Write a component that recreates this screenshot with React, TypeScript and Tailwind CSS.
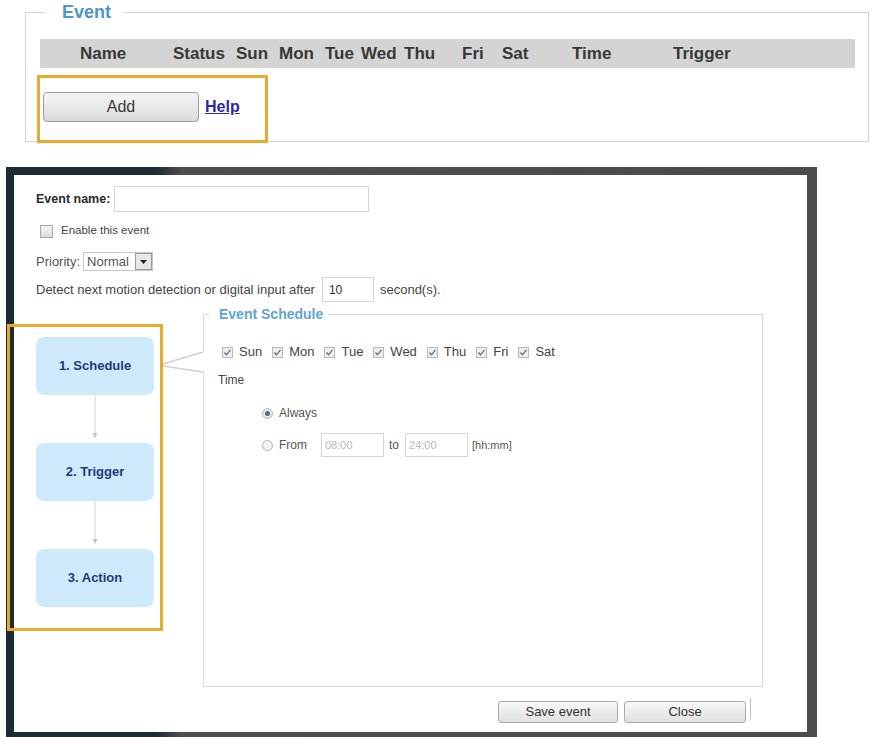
import React from "react";

function DayCheck({ label }: { label: string }) {
  return (
    <div className="flex items-center">
      <span className="w-[11px] h-[11px] border border-[#b9b9b9] bg-[#eeeeee] flex items-center justify-center">
        <svg width="9" height="9" viewBox="0 0 9 9">
          <path d="M1.5 4.5 L3.5 6.8 L7.5 1.8" fill="none" stroke="#5a6f8f" strokeWidth="1.3" />
        </svg>
      </span>
      <span className="ml-[6px] text-[13px] text-[#444]">{label}</span>
    </div>
  );
}

function Arrow() {
  return (
    <div className="w-[118px] h-[48px] flex justify-center">
      <svg width="10" height="48" viewBox="0 0 10 48">
        <line x1="5" y1="0" x2="5" y2="42" stroke="#d0d0d0" strokeWidth="1" />
        <path d="M2.5 38 L5 43 L7.5 38 Z" fill="#c4c4c4" />
      </svg>
    </div>
  );
}

function Step({ label }: { label: string }) {
  return (
    <div className="w-[118px] h-[58px] rounded-[8px] bg-[#cdeafb] flex items-center justify-center text-[13px] font-bold text-[#1f3a7a]">
      {label}
    </div>
  );
}

export default function App() {
  const cols = ["Name", "Status", "Sun", "Mon", "Tue", "Wed", "Thu", "Fri", "Sat", "Time", "Trigger"];
  return (
    <div className="w-[870px] h-[737px] bg-white overflow-hidden font-['Liberation_Sans',Arial,sans-serif]">
      {/* Top section */}
      <div className="pt-[2px] pl-[25px] pr-[1px]">
        <fieldset className="border border-[#d2d2d2] pl-[14px] pr-[13px]">
          <legend className="ml-[5px] pl-[17px] pr-[13px] text-[18px] leading-[21px] font-bold text-[#4f94cd]">Event</legend>
          <div className="mt-[16px] h-[29px] bg-[#d4d4d4] grid grid-cols-[93px_63px_43px_46px_36px_43px_58px_40px_70px_101px_1fr] items-center pl-[40px] text-[17px] font-bold text-[#383838]">
            {cols.map((c) => (
              <span key={c}>{c}</span>
            ))}
          </div>
          <div className="mt-[7px] ml-[-3px] mb-[-2px] w-[231px] h-[68px] border-[3px] border-[#e8a92c] pl-[3px] pt-[14px] flex items-start">
            <button className="w-[156px] h-[30px] rounded-[4px] border border-[#9c9c9c] bg-[linear-gradient(to_bottom,#f6f6f6,#dadada)] text-[16px] text-[#3a3a3a]">
              Add
            </button>
            <a className="ml-[6px] mt-[3px] text-[16px] font-bold text-[#2a2aa6] underline">Help</a>
          </div>
        </fieldset>
      </div>

      {/* Dialog */}
      <div className="mt-[25px] ml-[6px] w-[811px] h-[570px] pt-[8px] pl-[8px] pr-[10px] pb-[5px] bg-[linear-gradient(to_right,#1d2b32_0px,#1d2b32_150px,#4f4f4f_175px,#4b4b4b_100%)]">
        <div className="w-full h-full bg-white pl-[22px] pt-[11px] flex flex-col">
          {/* Event name row */}
          <div className="flex items-center h-[26px]">
            <span className="text-[12.5px] font-bold text-[#2a2a2a]">Event name:</span>
            <div className="ml-[4px] w-[255px] h-[26px] border border-[#d4d4d4]" />
          </div>
          {/* Enable */}
          <div className="mt-[12px] h-[14px] flex items-center pl-[4px]">
            <span className="w-[13px] h-[13px] border border-[#a8a8a8] bg-[linear-gradient(to_bottom,#f4f4f4,#dedede)]" />
            <span className="ml-[8px] text-[11.5px] text-[#444]">Enable this event</span>
          </div>
          {/* Priority */}
          <div className="mt-[14px] h-[19px] flex items-center">
            <span className="text-[13px] text-[#555]">Priority:</span>
            <div className="ml-[3px] w-[70px] h-[19px] border border-[#c8c8c8] flex items-center">
              <span className="pl-[3px] text-[13px] text-[#555] flex-1">Normal</span>
              <span className="w-[17px] h-[17px] border border-[#9a9a9a] bg-[#e6e6e6] flex items-center justify-center">
                <svg width="7" height="4" viewBox="0 0 7 4">
                  <path d="M0 0 L7 0 L3.5 4 Z" fill="#222" />
                </svg>
              </span>
            </div>
          </div>
          {/* Detect */}
          <div className="mt-[6px] h-[25px] flex items-center">
            <span className="text-[13px] text-[#444]">Detect next motion detection or digital input after</span>
            <div className="ml-[7px] w-[52px] h-[25px] border border-[#d4d4d4] flex items-center pl-[6px] text-[12px] text-[#333]">10</div>
            <span className="ml-[6px] text-[13px] text-[#444]">second(s).</span>
          </div>

          {/* Lower */}
          <div className="relative mt-[3px] flex items-start">
            <div className="mt-[19px] ml-[-29px] w-[156px] h-[307px] border-[3px] border-[#e8a92c] pl-[26px] pt-[10px] flex flex-col">
              <Step label="1. Schedule" />
              <Arrow />
              <Step label="2. Trigger" />
              <Arrow />
              <Step label="3. Action" />
            </div>
            <fieldset className="ml-[40px] w-[560px] h-[382px] border border-[#d8d8d8] pl-[18px]">
              <legend className="ml-[-13px] pl-[10px] pr-[5px] text-[14px] leading-[18px] font-bold text-[#62a4d3]">Event Schedule</legend>
              <div className="mt-[21px] h-[16px] flex items-center gap-[10px]">
                <DayCheck label="Sun" />
                <DayCheck label="Mon" />
                <DayCheck label="Tue" />
                <DayCheck label="Wed" />
                <DayCheck label="Thu" />
                <DayCheck label="Fri" />
                <DayCheck label="Sat" />
              </div>
              <div className="mt-[12px] ml-[-4px] h-[16px] flex items-center text-[12px] text-[#444]">Time</div>
              <div className="mt-[17px] ml-[40px] h-[16px] flex items-center">
                <span className="w-[11px] h-[11px] rounded-full border border-[#b5b5b5] bg-[#e8e8e8] flex items-center justify-center">
                  <span className="w-[5px] h-[5px] rounded-full bg-[#4d6a8f]" />
                </span>
                <span className="ml-[6px] text-[12px] text-[#555]">Always</span>
              </div>
              <div className="mt-[12px] ml-[40px] h-[24px] flex items-center">
                <span className="w-[11px] h-[11px] rounded-full border border-[#b5b5b5] bg-[#f2f2f2]" />
                <span className="ml-[6px] text-[12px] text-[#555]">From</span>
                <div className="ml-[14px] w-[63px] h-[24px] border border-[#d6d6d6] flex items-center pl-[3px] text-[11px] text-[#b8b8b8]">08:00</div>
                <span className="ml-[5px] text-[12px] text-[#555]">to</span>
                <div className="ml-[6px] w-[63px] h-[24px] border border-[#d6d6d6] flex items-center pl-[3px] text-[11px] text-[#b8b8b8]">24:00</div>
                <span className="ml-[4px] text-[11px] text-[#555]">[hh:mm]</span>
              </div>
            </fieldset>
            <svg className="absolute left-[124px] top-[40px]" width="50" height="35" viewBox="0 0 50 35">
              <rect x="41" y="7" width="5" height="20" fill="#fff" />
              <line x1="3" y1="19" x2="43" y2="7" stroke="#cfcfcf" strokeWidth="1.5" />
              <line x1="3" y1="21" x2="43" y2="27" stroke="#cfcfcf" strokeWidth="1.5" />
            </svg>
          </div>

          {/* Buttons */}
          <div className="mt-[14px] flex items-start justify-end mr-[56px]">
            <button className="w-[120px] h-[22px] rounded-[3px] border border-[#a8a8a8] bg-[linear-gradient(to_bottom,#f8f8f8,#e0e0e0)] text-[13px] text-[#333]">
              Save event
            </button>
            <button className="ml-[6px] w-[122px] h-[22px] rounded-[3px] border border-[#a8a8a8] bg-[linear-gradient(to_bottom,#f8f8f8,#e0e0e0)] text-[13px] text-[#333]">
              Close
            </button>
            <span className="ml-[1px] mt-[-4px] w-[4px] h-[24px] border-r border-[#bcbcbc] rounded-r-[3px]" />
          </div>
        </div>
      </div>
    </div>
  );
}
